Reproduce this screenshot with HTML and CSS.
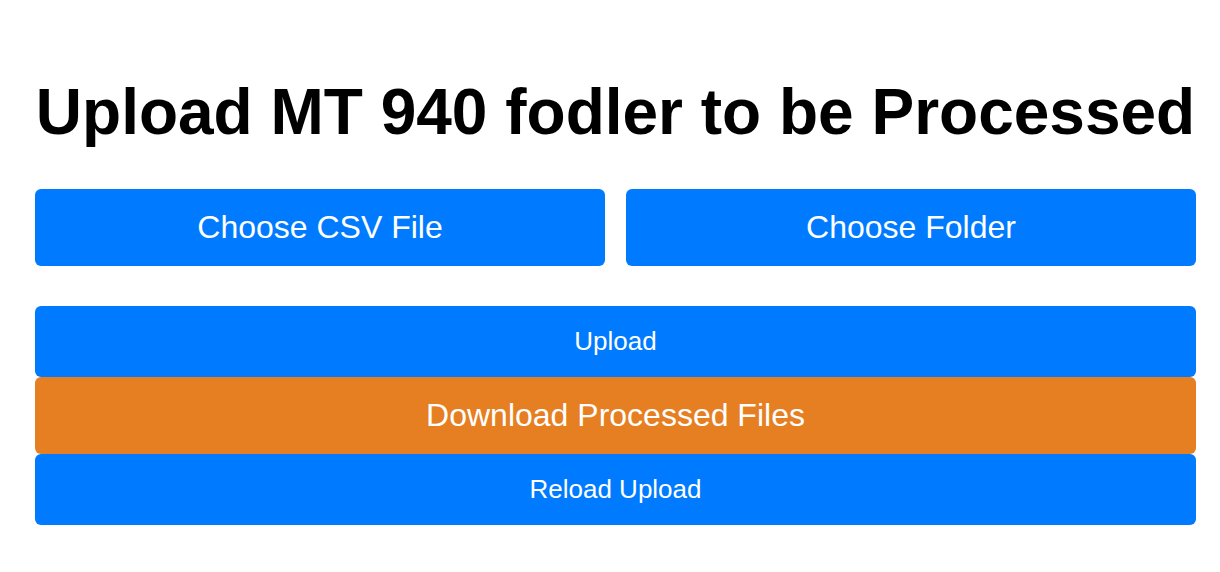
FILE: index.html
```html
<!DOCTYPE html>
<html lang="en">
<head>
<meta charset="utf-8">
<title>Upload MT 940</title>
<link rel="stylesheet" href="styles.css">
</head>
<body>
<main class="page">
  <h1 class="title">Upload MT 940 fodler to be Processed</h1>
  <div class="choose-row">
    <button class="btn btn-choose">Choose CSV File</button>
    <button class="btn btn-choose">Choose Folder</button>
  </div>
  <div class="actions">
    <button class="btn btn-action">Upload</button>
    <button class="btn btn-download">Download Processed Files</button>
    <button class="btn btn-action">Reload Upload</button>
  </div>
</main>
</body>
</html>
```
FILE: styles.css
```css
* { box-sizing: border-box; }
html, body { margin: 0; background: #fff; }
body { font-family: "Liberation Sans", Arial, sans-serif; color: #000; }
.page {
  padding: 75px 24px 0 35px;
  display: flex;
  flex-direction: column;
}
.title {
  margin: 0;
  font-size: 64px;
  font-weight: bold;
  text-align: center;
  line-height: 74px;
}
.choose-row {
  margin-top: 40px;
  display: flex;
  gap: 21px;
}
.btn {
  border: none;
  border-radius: 6px;
  color: #fff;
  font-family: "Liberation Sans", Arial, sans-serif;
  background: #007bff;
  cursor: pointer;
  padding: 0;
}
.btn-choose {
  flex: 1;
  height: 77px;
  font-size: 32px;
}
.actions {
  margin-top: 40px;
  display: flex;
  flex-direction: column;
}
.btn-action {
  height: 71px;
  font-size: 26px;
}
.btn-download {
  height: 77px;
  font-size: 32px;
  background: #e67e22;
}
```
